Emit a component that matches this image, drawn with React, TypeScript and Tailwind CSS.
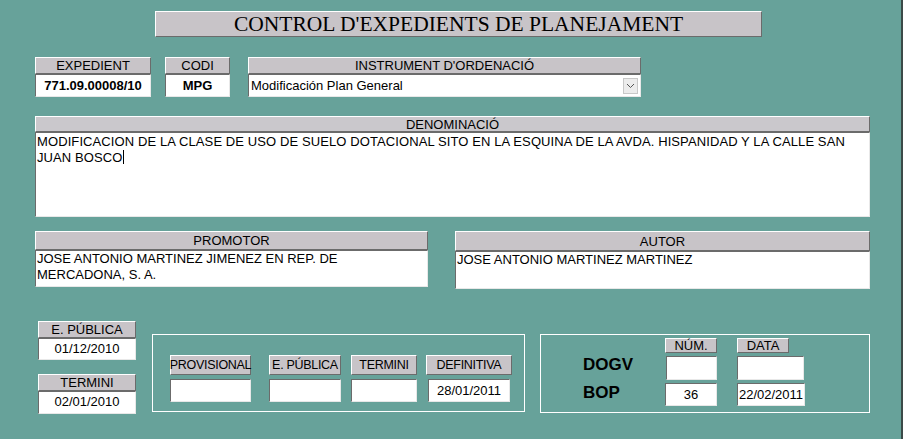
import type { ReactNode } from "react";

const raised = "bg-[#c8c4c8] border border-t-white border-l-white border-b-[#6b6b6b] border-r-[#6b6b6b]";
const sunken = "bg-white border border-t-[#6b6b6b] border-l-[#6b6b6b] border-b-[#e8e8e8] border-r-[#e8e8e8]";

function Label({ children, className = "" }: { children: ReactNode; className?: string }) {
  return (
    <div className={`${raised} flex items-center justify-center whitespace-nowrap leading-none text-black ${className}`}>
      {children}
    </div>
  );
}

function Field({ children, className = "" }: { children?: ReactNode; className?: string }) {
  return <div className={`${sunken} text-[13px] text-black ${className}`}>{children}</div>;
}

export default function App() {
  return (
    <div className="w-[903px] h-[439px] bg-[#67a29a] border-r-2 border-[#3b4a48] overflow-hidden font-['Liberation_Sans',Arial,sans-serif]">
      <div className="pt-[11px] pl-[155px]">
        <div className={`${raised} w-[607px] h-[26px] flex items-center justify-center font-['Liberation_Serif',serif] text-[21.5px] text-black`}>
          CONTROL D'EXPEDIENTS DE PLANEJAMENT
        </div>
      </div>

      <div className="mt-[20px] pl-[35px] flex">
        <div className="w-[116px]">
          <Label className="h-[17px] text-[13px]">EXPEDIENT</Label>
          <Field className="h-[23px] flex items-center justify-center font-bold">771.09.00008/10</Field>
        </div>
        <div className="w-[65px] ml-[14px]">
          <Label className="h-[17px] text-[13px]">CODI</Label>
          <Field className="h-[23px] flex items-center justify-center font-bold">MPG</Field>
        </div>
        <div className="w-[393px] ml-[18px]">
          <Label className="h-[17px] text-[13px]">INSTRUMENT D'ORDENACIÓ</Label>
          <Field className="h-[23px] flex items-center justify-between pl-[2px] pr-[2px]">
            <span>Modificación Plan General</span>
            <span className="w-[15px] h-[16px] bg-[#ececec] border border-[#c8c8c8] flex items-center justify-center">
              <svg width="9" height="6" viewBox="0 0 9 6">
                <path d="M1 1 L4.5 4.5 L8 1" fill="none" stroke="#555" strokeWidth="1" />
              </svg>
            </span>
          </Field>
        </div>
      </div>

      <div className="mt-[19px] pl-[35px]">
        <div className="w-[835px]">
          <Label className="h-[16px] text-[13px] bg-[#cac8cc]">DENOMINACIÓ</Label>
          <Field className="h-[85px] px-[1px] pt-[1px] leading-[16px] tracking-[0.1px]">
            MODIFICACION DE LA CLASE DE USO DE SUELO DOTACIONAL SITO EN LA ESQUINA DE LA AVDA. HISPANIDAD Y LA CALLE SAN JUAN BOSCO
            <span className="inline-block w-px h-[14px] bg-black align-[-2px]" />
          </Field>
        </div>
      </div>

      <div className="mt-[14px] pl-[35px] flex">
        <div className="w-[393px]">
          <Label className="h-[19px] text-[13px]">PROMOTOR</Label>
          <Field className="h-[37px] px-[1px] leading-[16px]">
            JOSE ANTONIO MARTINEZ JIMENEZ EN REP. DE<br />MERCADONA, S. A.
          </Field>
        </div>
        <div className="w-[415px] ml-[27px]">
          <Label className="h-[20px] text-[13px]">AUTOR</Label>
          <Field className="h-[38px] px-[1px] leading-[16px]">JOSE ANTONIO MARTINEZ MARTINEZ</Field>
        </div>
      </div>

      <div className="mt-[32px] flex">
        <div className="ml-[38px] w-[98px]">
          <Label className="h-[17px] text-[13px]">E. PÚBLICA</Label>
          <Field className="h-[22px] flex justify-center pt-[2px] leading-[16px]">01/12/2010</Field>
          <Label className="h-[17px] mt-[14px] text-[13px]">TERMINI</Label>
          <Field className="h-[23px] flex justify-center pt-[2px] leading-[16px]">02/01/2010</Field>
        </div>

        <div className="ml-[16px] mt-[13px] w-[373px] h-[78px] border border-white flex pl-[17px] pt-[20px]">
          <div className="w-[81px]">
            <Label className="h-[20px] text-[12.5px] tracking-[-0.3px]">PROVISIONAL</Label>
            <Field className="h-[23px] mt-[4px]" />
          </div>
          <div className="w-[72px] ml-[18px]">
            <Label className="h-[20px] text-[12.5px] tracking-[-0.3px]">E. PÚBLICA</Label>
            <Field className="h-[23px] mt-[4px]" />
          </div>
          <div className="w-[66px] ml-[10px]">
            <Label className="h-[20px] text-[12.5px] tracking-[-0.3px]">TERMINI</Label>
            <Field className="h-[23px] mt-[4px]" />
          </div>
          <div className="w-[86px] ml-[9px]">
            <Label className="h-[20px] text-[12.5px] tracking-[-0.3px]">DEFINITIVA</Label>
            <Field className="h-[23px] mt-[4px] mx-[2px] flex items-center justify-center">28/01/2011</Field>
          </div>
        </div>

        <div className="ml-[15px] mt-[13px] w-[330px] h-[79px] border border-white flex">
          <div className="pl-[42px] pt-[20px] w-[124px] flex flex-col gap-[8px] font-bold text-[17px] leading-[20px] text-black">
            <span>DOGV</span>
            <span>BOP</span>
          </div>
          <div className="pt-[3px] flex flex-col">
            <div className="flex">
              <Label className="w-[52px] h-[15px] text-[13px]">NÚM.</Label>
              <Label className="w-[52px] h-[15px] ml-[20px] text-[13px]">DATA</Label>
            </div>
            <div className="flex mt-[3px]">
              <Field className="w-[51px] h-[24px] ml-[1px]" />
              <Field className="w-[67px] h-[24px] ml-[20px]" />
            </div>
            <div className="flex mt-[3px]">
              <Field className="w-[52px] h-[23px] flex items-center justify-center">36</Field>
              <Field className="w-[68px] h-[23px] ml-[20px] flex items-center justify-center">22/02/2011</Field>
            </div>
          </div>
        </div>
      </div>
    </div>
  );
}
